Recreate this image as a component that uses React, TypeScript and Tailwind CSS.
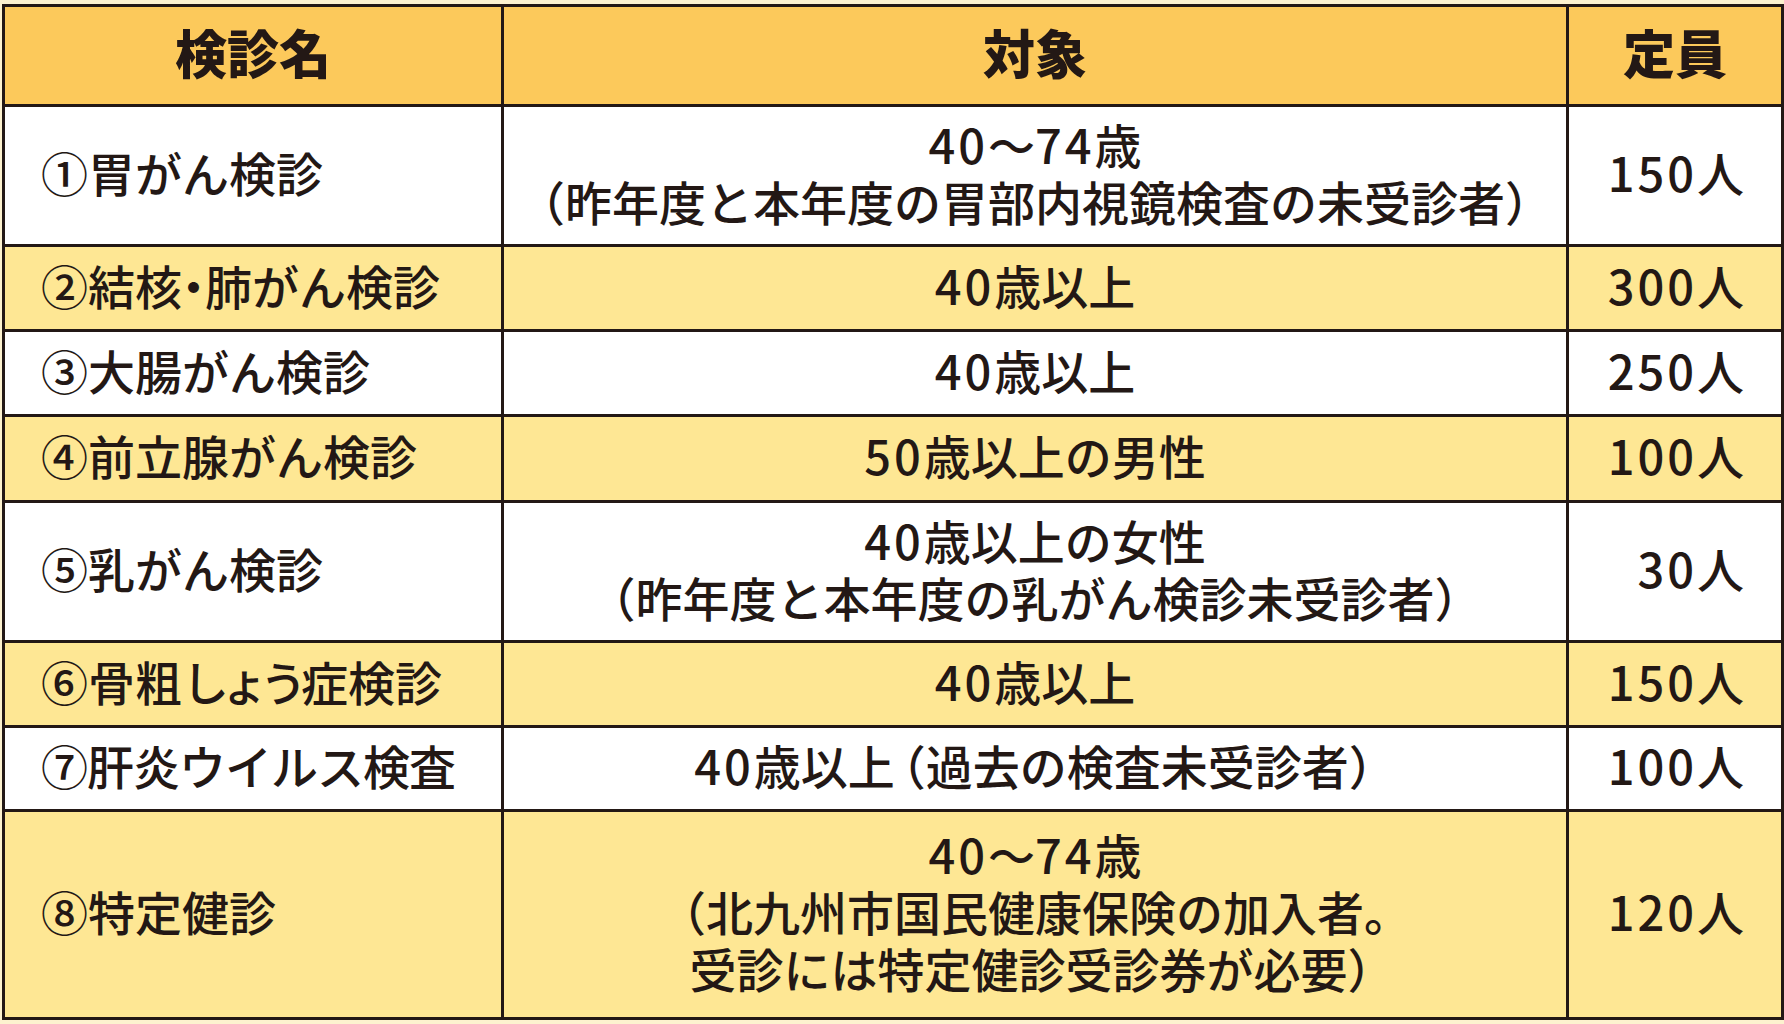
import React from 'react';

interface Row {
  name: React.ReactNode;
  nameClass?: string;
  target: React.ReactNode[];
  capacity: string;
  yellow: boolean;
  height: string;
}

// digits in the print are set wider than Noto's, so space them out a little
function spaced(text: string) {
  return text.split(/(\d+)/).map((part, i) =>
    /^\d+$/.test(part) ? (
      <span key={i} className="tracking-[3px]">
        {part}
      </span>
    ) : (
      <span key={i}>{part}</span>
    ),
  );
}

const ROWS: Row[] = [
  {
    name: '①胃がん検診',
    target: [spaced('40～74歳'), '（昨年度と本年度の胃部内視鏡検査の未受診者）'],
    capacity: '150人',
    yellow: false,
    height: 'h-[140px]',
  },
  {
    name: (
      <>
        ②結核<span className="mx-[-12px]">・</span>肺がん検診
      </>
    ),
    target: [spaced('40歳以上')],
    capacity: '300人',
    yellow: true,
    height: 'h-[85px]',
  },
  { name: '③大腸がん検診', target: [spaced('40歳以上')], capacity: '250人', yellow: false, height: 'h-[85px]' },
  { name: '④前立腺がん検診', target: [spaced('50歳以上の男性')], capacity: '100人', yellow: true, height: 'h-[86px]' },
  {
    name: '⑤乳がん検診',
    target: [spaced('40歳以上の女性'), '（昨年度と本年度の乳がん検診未受診者）'],
    capacity: '30人',
    yellow: false,
    height: 'h-[140px]',
  },
  {
    name: (
      <>
        ⑥骨粗<span className="tracking-[-8px]">しょう</span>
        <span className="ml-[2px]">症検診</span>
      </>
    ),
    target: [spaced('40歳以上')],
    capacity: '150人',
    yellow: true,
    height: 'h-[85px]',
  },
  {
    name: '⑦肝炎ウイルス検査',
    nameClass: 'tracking-[-1px]',
    target: [
      <>
        {spaced('40歳以上')}
        <span className="ml-[-16px]">（</span>過去の検査未受診者<span className="mr-[-20px]">）</span>
      </>,
    ],
    capacity: '100人',
    yellow: false,
    height: 'h-[84px]',
  },
  {
    name: '⑧特定健診',
    target: [
      spaced('40～74歳'),
      '（北九州市国民健康保険の加入者。',
      <>
        受診には特定健診受診券が必要<span className="mr-[-14px]">）</span>
      </>,
    ],
    capacity: '120人',
    yellow: true,
    height: 'h-[208px]',
  },
];

export default function App() {
  return (
    <div
      className="w-[1784px] h-[1024px] bg-[#fdf2cf] pt-[4px] pl-[2px] text-[#231815]"
      style={{ fontFamily: '"Noto Sans CJK JP", "Noto Sans", sans-serif' }}
    >
      <table className="table-fixed border-collapse w-[1779px] border-[3px] border-[#231815]">
        <colgroup>
          <col className="w-[499px]" />
          <col className="w-[1065px]" />
          <col className="w-[215px]" />
        </colgroup>
        <thead>
          <tr className="bg-[#fcc95b] h-[100px]">
            {['検診名', '対象', '定員'].map((h) => (
              <th key={h} className="border-[3px] border-[#231815] text-center text-[52px] font-black leading-none pb-[8px]">
                {h}
              </th>
            ))}
          </tr>
        </thead>
        <tbody>
          {ROWS.map((row, i) => (
            <tr key={i} className={`${row.height} ${row.yellow ? 'bg-[#fee794]' : 'bg-white'}`}>
              <td
                className={`border-[3px] border-[#231815] pl-[36px] pb-[8px] text-[47px] font-medium leading-[57px] whitespace-nowrap ${
                  row.nameClass ?? ''
                }`}
              >
                {row.name}
              </td>
              <td className="border-[3px] border-[#231815] pb-[8px] text-center text-[47px] font-medium leading-[57px] whitespace-nowrap">
                {row.target.map((line, j) => (
                  <div key={j}>{line}</div>
                ))}
              </td>
              <td className="border-[3px] border-[#231815] text-right pr-[37px] pb-[8px] text-[47px] font-medium leading-[57px] whitespace-nowrap">
                {spaced(row.capacity)}
              </td>
            </tr>
          ))}
        </tbody>
      </table>
    </div>
  );
}
